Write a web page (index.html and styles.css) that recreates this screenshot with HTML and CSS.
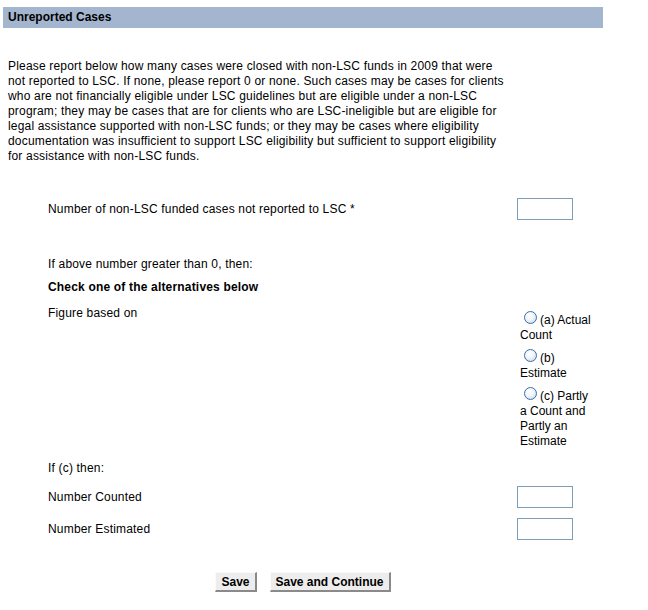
FILE: index.html
```html
<!DOCTYPE html>
<html>
<head>
<meta charset="utf-8">
<title>Unreported Cases</title>
<link rel="stylesheet" href="styles.css">
</head>
<body>
<div class="page">
  <div class="header">Unreported Cases</div>
  <p class="intro">Please report below how many cases were closed with non-LSC funds in 2009 that were not reported to LSC. If none, please report 0 or none. Such cases may be cases for clients who are not financially eligible under LSC guidelines but are eligible under a non-LSC program; they may be cases that are for clients who are LSC-ineligible but are eligible for legal assistance supported with non-LSC funds; or they may be cases where eligibility documentation was insufficient to support LSC eligibility but sufficient to support eligibility for assistance with non-LSC funds.</p>

  <div class="form">
    <div class="row row-main">
      <div class="label">Number of non-LSC funded cases not reported to LSC *</div>
      <div class="field"><input class="box" type="text"></div>
    </div>

    <div class="line line-if">If above number greater than 0, then:</div>
    <div class="line line-check">Check one of the alternatives below</div>

    <div class="row row-figure">
      <div class="label">Figure based on</div>
      <div class="field options">
        <label class="opt"><input class="radio" type="radio" name="fig">(a) Actual Count</label>
        <label class="opt"><input class="radio" type="radio" name="fig">(b) Estimate</label>
        <label class="opt"><input class="radio" type="radio" name="fig">(c) Partly a Count and Partly an Estimate</label>
      </div>
    </div>

    <div class="line line-c">If (c) then:</div>

    <div class="row row-counted">
      <div class="label">Number Counted</div>
      <div class="field"><input class="box" type="text"></div>
    </div>
    <div class="row row-estimated">
      <div class="label">Number Estimated</div>
      <div class="field"><input class="box" type="text"></div>
    </div>
  </div>

  <div class="buttons">
    <button class="btn" type="button">Save</button>
    <button class="btn" type="button">Save and Continue</button>
  </div>
</div>
</body>
</html>
```

FILE: styles.css
```css
html, body {
  margin: 0;
  padding: 0;
  background: #ffffff;
}

body {
  font-family: "Liberation Sans", Arial, sans-serif;
  font-size: 12px;
  line-height: 15px;
  color: #000000;
}

.page {
  width: 600px;
  margin: 7px 0 0 3px;
}

.header {
  height: 21px;
  line-height: 21px;
  background: #a4b6cf;
  font-weight: bold;
  padding-left: 5px;
}

.intro {
  margin: 31px 0 0 0;
  padding-left: 5px;
  width: 496px;
  letter-spacing: 0.18px;
}

.form {
  padding-left: 45px;
}

.label,
.line {
  letter-spacing: 0.18px;
}

.row {
  display: grid;
  grid-template-columns: 469px 86px;
  align-items: center;
}

.row-main {
  margin-top: 34px;
}

.row-figure {
  align-items: start;
  margin-top: 11px;
}

.row-counted {
  margin-top: 10px;
}

.row-estimated {
  margin-top: 10px;
}

.line-if {
  margin-top: 37px;
}

.line-check {
  margin-top: 8px;
  font-weight: bold;
}

.line-c {
  margin-top: 12px;
}

.box {
  display: block;
  box-sizing: border-box;
  width: 56px;
  height: 22px;
  margin: 0;
  border: 1px solid #7f9db9;
  background: #ffffff;
  font: inherit;
}

.options {
  padding-left: 3px;
  width: 74px;
  margin-top: 2px;
}

.opt {
  display: block;
}

.opt + .opt {
  margin-top: 3px;
}

.radio {
  -webkit-appearance: none;
  appearance: none;
  display: inline-block;
  box-sizing: border-box;
  width: 13px;
  height: 13px;
  margin: 3px 3px 0 4px;
  border: 1px solid #3d6ea8;
  border-radius: 50%;
  background: radial-gradient(circle at 40% 35%, #ffffff 0%, #f0f4f9 45%, #bfd0e4 100%);
  vertical-align: baseline;
}

.buttons {
  display: flex;
  justify-content: center;
  gap: 13px;
  margin-top: 32px;
}

.btn {
  box-sizing: border-box;
  height: 20px;
  margin: 0;
  padding: 0 5px;
  font-family: "Liberation Sans", Arial, sans-serif;
  font-size: 12px;
  font-weight: bold;
  color: #000000;
  background: #ededed;
  border-style: solid;
  border-width: 1px 2px 2px 1px;
  border-color: #fafafa #8a8a8a #8a8a8a #fafafa;
  border-radius: 0;
}
```
